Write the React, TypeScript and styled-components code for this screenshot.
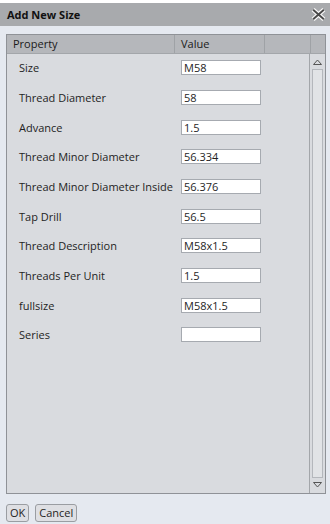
import React from 'react'
import styled, { createGlobalStyle } from 'styled-components'

const rows = [
  { name: 'Size', value: 'M58' },
  { name: 'Thread Diameter', value: '58' },
  { name: 'Advance', value: '1.5' },
  { name: 'Thread Minor Diameter', value: '56.334' },
  { name: 'Thread Minor Diameter Inside', value: '56.376' },
  { name: 'Tap Drill', value: '56.5' },
  { name: 'Thread Description', value: 'M58x1.5' },
  { name: 'Threads Per Unit', value: '1.5' },
  { name: 'fullsize', value: 'M58x1.5' },
  { name: 'Series', value: '' },
]

const App = () => {
  return (
    <>
      <GlobalStyle />
      <Window>
        <TitleBar>
          <Title>Add New Size</Title>
          <CloseIcon viewBox='0 0 14 12'>
            <path d='M2 1.5 L12 10.5 M12 1.5 L2 10.5' stroke='#fafafa' strokeWidth='4' />
            <path d='M2 1.5 L12 10.5 M12 1.5 L2 10.5' stroke='#4a4a4a' strokeWidth='1.8' />
          </CloseIcon>
        </TitleBar>
        <Content>
          <Grid>
            <HeaderRow>
              <HeaderCell $width={168}>Property</HeaderCell>
              <HeaderCell $width={90}>Value</HeaderCell>
              <HeaderCell $width={46} />
              <HeaderCell $width={15} $last />
            </HeaderRow>
            <GridBody>
              <RowList>
                {rows.map((row) => (
                  <Row key={row.name}>
                    <Label>{row.name}</Label>
                    <ValueInput readOnly value={row.value} />
                  </Row>
                ))}
              </RowList>
              <ScrollBar>
                <Arrow viewBox='0 0 9 6'>
                  <path d='M0.5 5.5 L4.5 1 L8.5 5.5 Z' fill='none' stroke='#555' />
                </Arrow>
                <Track />
                <Arrow viewBox='0 0 9 6'>
                  <path d='M0.5 0.5 L4.5 5 L8.5 0.5 Z' fill='none' stroke='#555' />
                </Arrow>
              </ScrollBar>
            </GridBody>
          </Grid>
          <Footer>
            <Button>OK</Button>
            <Button>Cancel</Button>
          </Footer>
        </Content>
      </Window>
    </>
  )
}

const GlobalStyle = createGlobalStyle`
  body {
    margin: 0;
    background: #ffffff;
    font-family: 'Open Sans', 'Noto Sans', sans-serif;
  }
`

const Window = styled.div`
  width: 330px;
  height: 524px;
  padding-top: 3px;
  box-sizing: border-box;
  display: flex;
  flex-direction: column;
`

const TitleBar = styled.div`
  height: 23px;
  background: #a8aaad;
  display: flex;
  align-items: center;
  justify-content: space-between;
  padding: 0 4px 0 7px;
`

const Title = styled.span`
  font-family: 'Open Sans', sans-serif;
  font-weight: 700;
  font-size: 11px;
  color: #111;
`

const CloseIcon = styled.svg`
  width: 15px;
  height: 13px;
`

const Content = styled.div`
  flex: 1;
  background: #e5e9f0;
  padding: 8px 4px 0 6px;
  display: flex;
  flex-direction: column;
`

const Grid = styled.div`
  height: 458px;
  border: 1px solid #8f9297;
  background: #d9dbdf;
  display: flex;
  flex-direction: column;
`

const HeaderRow = styled.div`
  height: 18px;
  display: flex;
  background: #b5b7bb;
  border-bottom: 1px solid #a3a6aa;
`

const HeaderCell = styled.div<{ $width: number; $last?: boolean }>`
  width: ${(p) => p.$width}px;
  flex: ${(p) => (p.$last ? '1' : 'none')};
  border-right: ${(p) => (p.$last ? 'none' : '1px solid #9fa2a6')};
  font-size: 11px;
  color: #1a1a1a;
  padding-left: 6px;
  line-height: 18px;
  box-sizing: border-box;
`

const GridBody = styled.div`
  flex: 1;
  display: flex;
`

const RowList = styled.div`
  flex: 1;
  display: flex;
  flex-direction: column;
  margin-top: -1px;
`

const Row = styled.div`
  height: 29.67px;
  display: flex;
  align-items: center;
  padding-left: 12px;
`

const Label = styled.span`
  width: 162px;
  font-size: 11px;
  color: #1e1e1e;
`

const ValueInput = styled.input`
  width: 80px;
  height: 15px;
  box-sizing: border-box;
  border: 1px solid #a6aab0;
  background: #ffffff;
  font-family: 'Open Sans', sans-serif;
  font-size: 11px;
  color: #1e1e1e;
  padding: 0 2px;
  outline: none;
`

const ScrollBar = styled.div`
  width: 15px;
  border-left: 1px solid #a3a6aa;
  display: flex;
  flex-direction: column;
  align-items: center;
  padding: 5px 0 5px;
  gap: 4px;
`

const Arrow = styled.svg`
  width: 9px;
  height: 6px;
`

const Track = styled.div`
  flex: 1;
  width: 9px;
  border: 1px solid #b4b7bc;
  background: #e1e3e6;
`

const Footer = styled.div`
  display: flex;
  gap: 6px;
  padding-top: 10px;
`

const Button = styled.button`
  height: 18px;
  padding: 0 3px;
  border: 1px solid #9a9da2;
  border-radius: 3px;
  background: #dedfe3;
  font-family: 'Open Sans', sans-serif;
  font-size: 11px;
  color: #1e1e1e;
  line-height: 14px;
`

export default App
